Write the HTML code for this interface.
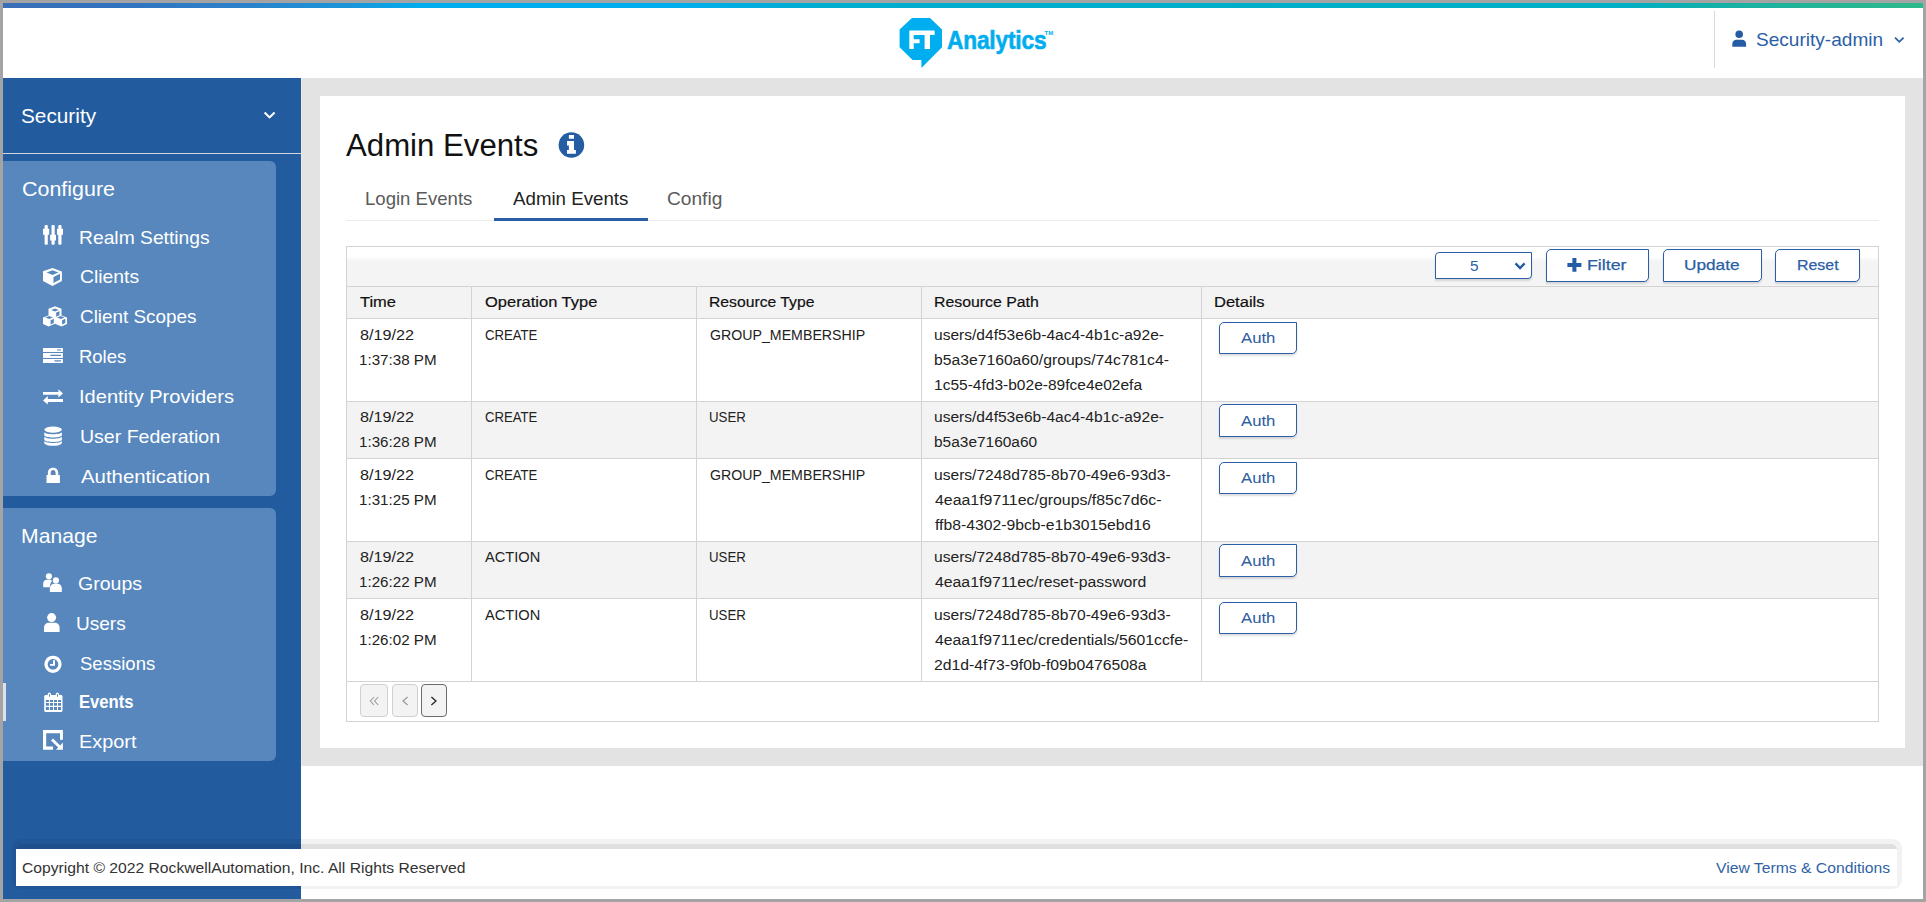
<!DOCTYPE html>
<html><head><meta charset="utf-8"><title>Admin Events</title>
<style>
*{box-sizing:border-box;margin:0;padding:0}
html,body{width:1926px;height:902px;overflow:hidden;background:#a4a4a4}
body{font-family:"Liberation Sans",sans-serif}
#root{position:relative;width:1926px;height:902px;background:#a4a4a4;overflow:hidden}
.a{position:absolute}
.t{position:absolute;white-space:nowrap;font-family:"Liberation Sans",sans-serif}
.topbar{left:3px;top:3px;width:1920px;height:5px;background:linear-gradient(to right,#3b6fb7 0%,#3271bd 5%,#2c80c9 12%,#1a95d8 18%,#00aeef 22%,#00aeef 35%,#00acd0 42%,#00aec8 70%,#00aec6 84%,#17b0a4 90%,#25b595 95%,#2bb98a 100%)}
.header{left:3px;top:8px;width:1920px;height:70px;background:#fff}
.hdiv{left:1714px;top:11px;width:1px;height:57px;background:#d5dbe2}
.side{left:3px;top:78px;width:298px;height:821px;background:#235b9f}
.sdiv{left:3px;top:153px;width:298px;height:1px;background:#d3d6da}
.panel{background:#5787bd;border-radius:0 6px 6px 0}
.sline{left:301px;top:78px;width:1px;height:688px;background:#eeeae6}
.maingray{left:302px;top:78px;width:1621px;height:688px;background:#e3e3e3}
.mainwhite{left:301px;top:766px;width:1622px;height:133px;background:#fff}
.card{left:320px;top:96px;width:1585px;height:652px;background:#fff}
.tabline{left:346px;top:220px;width:1533px;height:1px;background:#ececec}
.tabact{left:494px;top:218px;width:154px;height:3px;background:#2a5ea5}
.tbl{left:346px;top:246px;width:1533px;height:476px;border:1px solid #d3d3d3;background:#fff}
.toolbar{left:347px;top:247px;width:1531px;height:39px;background:linear-gradient(to bottom,#fff 0px,#fff 10px,#f8f8f8 12.5px,#f4f4f4 15px,#f4f4f4 100%)}
.hrow{left:347px;top:287px;width:1531px;height:31px;background:#f3f3f3}
.hl{height:1px;background:#d3d3d3}
.vl{width:1px;background:#d3d3d3}
.stripe{background:#f3f3f3}
.btn{border:1.5px solid #2b5ea6;background:#fff;border-radius:5px 0 5px 0;box-shadow:0 2px 2px rgba(0,0,0,.13)}
.pbtn{border:1px solid #cfcfcf;background:#f3f3f3;border-radius:4px}
.footshadow{left:12px;top:839px;width:1890px;height:50px;background:rgba(0,0,0,.05);border-radius:9px}
.footband{left:16px;top:844px;width:1881px;height:6px;background:rgba(0,0,0,.08);border-radius:6px 6px 0 0}
.footer{left:16px;top:849px;width:1881px;height:37px;background:#fff}

</style></head><body>
<div id="root">
<div class="a topbar"></div>
<div class="a header"></div>
<div class="a hdiv"></div>
<!-- logo -->
<svg class="a" style="left:895px;top:14px" width="60" height="58" viewBox="895 14 60 58">
  <polygon fill="#00aeef" points="912,18 930,18 942,29.6 942,47.3 921.4,68 921.4,60 912.6,60 899.6,47.3 899.6,29.6"/>
  <path fill="#fff" d="M909.3,30.6 H934.6 V35 H930 V48.9 H924.6 V35 H913.7 V39.3 H919.6 V43.3 H913.7 V48.9 H909.3 Z"/>
</svg>
<div class="t" style="left:946.8px;top:26.5px;font-size:26px;line-height:26px;font-weight:700;color:#00aeef;transform:scaleX(0.873);transform-origin:0 0;letter-spacing:-0.2px;-webkit-text-stroke:0.6px #00aeef">Analytics</div>
<div class="t" style="left:1044.5px;top:30px;font-size:6px;line-height:6px;font-weight:700;color:#00aeef">TM</div>
<!-- header user -->
<svg class="a" style="left:1730px;top:28px" width="20" height="22" viewBox="1730 28 20 22">
  <circle cx="1739.2" cy="34.2" r="3.8" fill="#245da3"/>
  <path fill="#245da3" d="M1732.3,46.8 V44 C1732.3,41.5 1734,39.7 1736.5,39.7 H1742 C1744.4,39.7 1746.1,41.5 1746.1,44 V46.8 Z"/>
</svg>
<svg class="a" style="left:1890px;top:33px" width="18" height="14" viewBox="1890 33 18 14">
  <polyline points="1895,37.6 1899.3,41.8 1903.6,37.6" fill="none" stroke="#2b5fa7" stroke-width="1.8"/>
</svg>

<!-- sidebar -->
<div class="a side"></div>
<div class="a sdiv"></div>
<svg class="a" style="left:258px;top:106px" width="22" height="18" viewBox="258 106 22 18">
  <polyline points="264.6,112.5 269.6,117.4 274.6,112.5" fill="none" stroke="#fff" stroke-width="2.1"/>
</svg>
<div class="a panel" style="left:3px;top:161px;width:273px;height:335px"></div>
<div class="a panel" style="left:3px;top:508px;width:273px;height:253px"></div>
<div class="a" style="left:3px;top:683px;width:3px;height:38px;background:#dde2ea"></div>

<svg class="a" style="left:38px;top:220px" width="34" height="540" viewBox="38 220 34 540" fill="#fff">
  <!-- sliders -->
  <rect x="44.6" y="225" width="3.2" height="19.8" rx="1"/>
  <rect x="51.5" y="225" width="3.2" height="19.8" rx="1"/>
  <rect x="58.3" y="225" width="3.2" height="19.8" rx="1"/>
  <path fill-rule="evenodd" d="M43,228.8 h6.2 v6 h-6.2 z M45.1,231 v1.8 h1.9 v-1.8 z"/>
  <path fill-rule="evenodd" d="M50.1,234.7 h5.9 v5.8 h-5.9 z M52.1,236.9 v1.8 h1.9 v-1.8 z"/>
  <path fill-rule="evenodd" d="M57,228.8 h6 v6 h-6 z M59.1,231 v1.8 h1.9 v-1.8 z"/>
  <!-- cube -->
  <path fill-rule="evenodd" d="M52.5,267.9 L61.9,271.5 V281 L52.5,286 L43,281 V271.3 Z M46.6,272.6 L52.5,274.9 L58.4,272.6 L52.5,270.3 Z M53.5,277 V282.9 L60,279.6 V273.8 Z"/>
  <!-- cubes -->
  <path fill-rule="evenodd" d="M55,306.2 L61.5,308.8 V315.5 L67,317.6 V324 L61.5,326.5 L55,323.8 L48.5,326.5 L43,324 V317.6 L48.5,315.5 V308.8 Z
    M51.3,310 L55,311.4 L58.7,310 L55,308.6 Z M56.2,312.6 V316.7 L59.5,315.3 V311.3 Z
    M45.5,317.5 L49.2,318.9 L52.9,317.5 L49.2,316.1 Z M50.6,320.2 V324.4 L53.8,323 V318.8 Z
    M57.1,317.5 L60.8,318.9 L64.5,317.5 L60.8,316.1 Z M62.1,320.2 V324.4 L65.3,323 V318.8 Z"/>
  <!-- server -->
  <path fill-rule="evenodd" d="M43,347.9 h19.9 v4.1 h-19.9 z M57,349.4 v1.2 h4 v-1.2 z"/>
  <path fill-rule="evenodd" d="M43,352.9 h19.9 v5 h-19.9 z M50.4,354.8 v1.3 h10.6 v-1.3 z"/>
  <path fill-rule="evenodd" d="M43,358.9 h19.9 v4 h-19.9 z M54.4,360.3 v1.3 h6.6 v-1.3 z"/>
  <!-- exchange -->
  <path d="M43,391.9 H58.4 V389.2 L63,393.4 L58.4,397.6 V394.8 H43 Z"/>
  <path d="M63,399 H47.8 V396 L43,400.5 L47.8,404.4 V401.9 H63 Z"/>
  <!-- database -->
  <ellipse cx="53.1" cy="429.6" rx="8.8" ry="3.1"/>
  <path d="M44.3,432.2 C46,434.8 60.2,434.8 61.9,432.2 V435.6 C60.2,438.2 46,438.2 44.3,435.6 Z"/>
  <path d="M44.3,436.7 C46,439.3 60.2,439.3 61.9,436.7 V440 C60.2,442.6 46,442.6 44.3,440 Z"/>
  <path d="M44.3,441.1 C46,443.7 60.2,443.7 61.9,441.1 V443.2 C60.2,446.6 46,446.6 44.3,443.2 Z"/>
  <!-- lock -->
  <path fill-rule="evenodd" d="M47.9,475 V472.6 C47.9,469.6 50.2,467.8 53.05,467.8 C55.9,467.8 58.2,469.6 58.2,472.6 V475 Z M50.7,475 V472.8 C50.7,471.1 51.7,469.9 53.1,469.9 C54.5,469.9 55.6,471.1 55.6,472.8 V475 Z"/>
  <rect x="46.5" y="475" width="13.4" height="8"/>
  <!-- user-friends -->
  <circle cx="48.9" cy="576.3" r="3.1"/>
  <path d="M43.2,587.3 V583.6 C43.2,581.5 44.8,579.8 46.9,579.8 H49.5 C50.6,579.8 51.5,580.2 52.1,580.9 C50.6,582.3 49.9,584.4 49.9,586.5 V587.3 Z"/>
  <circle cx="55.9" cy="580.4" r="3.1"/>
  <path d="M49.9,591.9 V588.3 C49.9,585.8 51.8,583.8 54.3,583.8 H57.4 C59.9,583.8 61.8,585.8 61.8,588.3 V591.9 Z"/>
  <!-- user -->
  <circle cx="51.6" cy="617.6" r="4.5"/>
  <path d="M44,631.9 V627.6 C44,625 46,622.8 48.6,622.8 H55 C57.6,622.8 59.6,625 59.6,627.6 V631.9 Z"/>
  <!-- clock -->
  <path fill-rule="evenodd" d="M53,655.7 A8.6,8.6 0 1 1 52.99,655.7 Z M53,659 A5.3,5.3 0 1 0 53.01,659 Z"/>
  <path d="M53,660.2 H55 V665.8 H50 V664 H53 Z"/>
  <!-- calendar -->
  <path fill-rule="evenodd" d="M44.2,696.5 C44.2,695.6 44.9,695 45.8,695 H47.6 C47.7,693.4 48.4,692.5 49.4,692.5 C50.4,692.5 51.1,693.4 51.2,695 H55.6 C55.7,693.4 56.4,692.5 57.4,692.5 C58.4,692.5 59.1,693.4 59.2,695 H61 C61.9,695 62.5,695.6 62.5,696.5 V710.4 C62.5,711.3 61.9,711.9 61,711.9 H45.7 C44.8,711.9 44.2,711.3 44.2,710.4 Z
   M45.9,700 h3 v2 h-3z M49.9,700 h3.1 v2 h-3.1z M54,700 h3 v2 h-3z M58,700 h3 v2 h-3z
   M45.9,703.1 h3 v2.6 h-3z M49.9,703.1 h3.1 v2.6 h-3.1z M54,703.1 h3 v2.6 h-3z M58,703.1 h3 v2.6 h-3z
   M45.9,707 h3 v2.9 h-3z M49.9,707 h3.1 v2.9 h-3.1z M54,707 h3 v2.9 h-3z M58,707 h3 v2.9 h-3z
   M49,694 h0.9 v2.8 h-0.9z M57,694 h0.9 v2.8 h-0.9z"/>
  <!-- export -->
  <path d="M43,730 H62.9 V739.7 H60 V733.2 H46.2 V746.6 H53 V749.8 H43 Z"/>
  <path d="M56,749.8 L58.2,747.6 L51,740.4 L53,738.4 L60.2,745.6 L62.9,742.6 V749.8 Z"/>
</svg>

<!-- main -->
<div class="a sline"></div><div class="a" style="left:301px;top:766px;width:1px;height:133px;background:#ebebeb"></div>
<div class="a maingray"></div>
<div class="a mainwhite"></div>
<div class="a card"></div>
<svg class="a" style="left:556px;top:130px" width="32" height="32" viewBox="556 130 32 32">
  <circle cx="571.4" cy="145" r="12.8" fill="#245da3"/>
  <path fill="#fff" d="M568.9,135 H574 V138.7 H568.9 Z M567,141 H574 V149.9 H575.9 V153.8 H567 V149.9 H568.9 V145.5 H567 Z"/>
</svg>
<div class="a tabline"></div>
<div class="a tabact"></div>

<div class="a tbl"></div>
<div class="a toolbar"></div>
<div class="a hl" style="left:347px;top:286px;width:1531px"></div>
<div class="a hrow"></div>
<div class="a hl" style="left:347px;top:318px;width:1531px"></div>
<div class="a stripe" style="left:347px;top:402px;width:1531px;height:56px"></div>
<div class="a stripe" style="left:347px;top:542px;width:1531px;height:56px"></div>
<div class="a hl" style="left:347px;top:401px;width:1531px"></div>
<div class="a hl" style="left:347px;top:458px;width:1531px"></div>
<div class="a hl" style="left:347px;top:541px;width:1531px"></div>
<div class="a hl" style="left:347px;top:598px;width:1531px"></div>
<div class="a hl" style="left:347px;top:681px;width:1531px"></div>
<div class="a vl" style="left:471px;top:287px;height:394px"></div>
<div class="a vl" style="left:696px;top:287px;height:394px"></div>
<div class="a vl" style="left:921px;top:287px;height:394px"></div>
<div class="a vl" style="left:1201px;top:287px;height:394px"></div>

<!-- toolbar controls -->
<div class="a btn" style="left:1435px;top:252px;width:97px;height:27px;border-radius:4px 0 4px 0"></div>
<svg class="a" style="left:1510px;top:258px" width="20" height="14" viewBox="1510 258 20 14">
  <polyline points="1515.5,263.4 1520.1,268 1524.6,263.4" fill="none" stroke="#245da3" stroke-width="2.4"/>
</svg>
<div class="a btn" style="left:1546px;top:249px;width:103px;height:33px"></div>
<svg class="a" style="left:1565px;top:256px" width="18" height="18" viewBox="1565 256 18 18">
  <path fill="#245da3" d="M1572.4,258 H1576.4 V262.9 H1581.4 V266.9 H1576.4 V271.8 H1572.4 V266.9 H1567.4 V262.9 H1572.4 Z"/>
</svg>
<div class="a btn" style="left:1663px;top:249px;width:99px;height:33px"></div>
<div class="a btn" style="left:1775px;top:249px;width:85px;height:33px"></div>

<!-- auth buttons -->
<div class="a btn" style="left:1219px;top:322px;width:78px;height:32px;border-width:1.5px"></div>
<div class="a btn" style="left:1219px;top:404px;width:78px;height:33px;border-width:1.5px"></div>
<div class="a btn" style="left:1219px;top:462px;width:78px;height:32px;border-width:1.5px"></div>
<div class="a btn" style="left:1219px;top:544px;width:78px;height:33px;border-width:1.5px"></div>
<div class="a btn" style="left:1219px;top:602px;width:78px;height:32px;border-width:1.5px"></div>

<!-- pagination -->
<div class="a pbtn" style="left:360px;top:684px;width:28px;height:33px"></div>
<div class="a pbtn" style="left:392px;top:684px;width:26px;height:33px"></div>
<div class="a pbtn" style="left:421px;top:684px;width:26px;height:33px;border-color:#6b6b6b"></div>
<svg class="a" style="left:360px;top:690px" width="90" height="22" viewBox="360 690 90 22" fill="none" stroke-width="1.2">
  <polyline points="374,697 370.4,701 374,705" stroke="#9a9a9a" stroke-width="1.1"/>
  <polyline points="378.2,697 374.6,701 378.2,705" stroke="#9a9a9a" stroke-width="1.1"/>
  <polyline points="407.6,697 403,701 407.6,705" stroke="#9a9a9a"/>
  <polyline points="431.4,697 436,701 431.4,705" stroke="#222" stroke-width="1.25"/>
</svg>

<!-- footer -->
<div class="a footshadow"></div>
<div class="a footband"></div>
<div class="a footer"></div>

<div class="t" style="left:1755.73px;top:31.25px;font-size:18.36px;line-height:18.36px;transform:scaleX(1.0382);transform-origin:0 0;color:#2b5fa7;font-weight:400;">Security-admin</div>
<div class="t" style="left:21.36px;top:105.93px;font-size:20.4px;line-height:20.4px;transform:scaleX(1.0190);transform-origin:0 0;color:#ffffff;font-weight:400;">Security</div>
<div class="t" style="left:21.51px;top:179.13px;font-size:20.4px;line-height:20.4px;transform:scaleX(1.0512);transform-origin:0 0;color:#ffffff;font-weight:400;">Configure</div>
<div class="t" style="left:79.42px;top:227.58px;font-size:19.04px;line-height:19.04px;transform:scaleX(1.0127);transform-origin:0 0;color:#ffffff;font-weight:400;">Realm Settings</div>
<div class="t" style="left:80.02px;top:267.08px;font-size:19.04px;line-height:19.04px;transform:scaleX(1.0167);transform-origin:0 0;color:#ffffff;font-weight:400;">Clients</div>
<div class="t" style="left:80.04px;top:307.08px;font-size:19.04px;line-height:19.04px;transform:scaleX(0.9919);transform-origin:0 0;color:#ffffff;font-weight:400;">Client Scopes</div>
<div class="t" style="left:79.39px;top:347.08px;font-size:19.04px;line-height:19.04px;transform:scaleX(0.9693);transform-origin:0 0;color:#ffffff;font-weight:400;">Roles</div>
<div class="t" style="left:79.35px;top:387.08px;font-size:19.04px;line-height:19.04px;transform:scaleX(1.0539);transform-origin:0 0;color:#ffffff;font-weight:400;">Identity Providers</div>
<div class="t" style="left:80.09px;top:427.08px;font-size:19.04px;line-height:19.04px;transform:scaleX(1.0261);transform-origin:0 0;color:#ffffff;font-weight:400;">User Federation</div>
<div class="t" style="left:80.56px;top:466.88px;font-size:19.04px;line-height:19.04px;transform:scaleX(1.0703);transform-origin:0 0;color:#ffffff;font-weight:400;">Authentication</div>
<div class="t" style="left:20.56px;top:525.63px;font-size:20.4px;line-height:20.4px;transform:scaleX(1.0384);transform-origin:0 0;color:#ffffff;font-weight:400;">Manage</div>
<div class="t" style="left:77.82px;top:574.08px;font-size:19.04px;line-height:19.04px;transform:scaleX(1.0277);transform-origin:0 0;color:#ffffff;font-weight:400;">Groups</div>
<div class="t" style="left:76.33px;top:613.58px;font-size:19.04px;line-height:19.04px;transform:scaleX(1.0008);transform-origin:0 0;color:#ffffff;font-weight:400;">Users</div>
<div class="t" style="left:79.76px;top:653.88px;font-size:19.04px;line-height:19.04px;transform:scaleX(0.9739);transform-origin:0 0;color:#ffffff;font-weight:400;">Sessions</div>
<div class="t" style="left:78.97px;top:731.98px;font-size:19.04px;line-height:19.04px;transform:scaleX(1.0444);transform-origin:0 0;color:#ffffff;font-weight:400;">Export</div>
<div class="t" style="left:78.79px;top:691.98px;font-size:19.04px;line-height:19.04px;transform:scaleX(0.8733);transform-origin:0 0;color:#ffffff;font-weight:700;">Events</div>
<div class="t" style="left:346.14px;top:130.39px;font-size:30.6px;line-height:30.6px;transform:scaleX(1.0190);transform-origin:0 0;color:#111;font-weight:400;">Admin Events</div>
<div class="t" style="left:365.08px;top:190.05px;font-size:18.36px;line-height:18.36px;transform:scaleX(1.0117);transform-origin:0 0;color:#5a5a5a;font-weight:400;">Login Events</div>
<div class="t" style="left:512.96px;top:189.55px;font-size:18.36px;line-height:18.36px;transform:scaleX(1.0188);transform-origin:0 0;color:#222;font-weight:400;">Admin Events</div>
<div class="t" style="left:667.13px;top:190.05px;font-size:18.36px;line-height:18.36px;transform:scaleX(1.0419);transform-origin:0 0;color:#5a5a5a;font-weight:400;">Config</div>
<div class="t" style="left:1470.48px;top:258.45px;font-size:15.3px;line-height:15.3px;transform:scaleX(1.0085);transform-origin:0 0;color:#2a5ea5;font-weight:400;">5</div>
<div class="t" style="left:1587.04px;top:257.35px;font-size:15.3px;line-height:15.3px;transform:scaleX(1.1620);transform-origin:0 0;color:#2a5ea5;font-weight:400;-webkit-text-stroke:0.25px #2a5ea5;">Filter</div>
<div class="t" style="left:1683.97px;top:257.35px;font-size:15.3px;line-height:15.3px;transform:scaleX(1.1252);transform-origin:0 0;color:#2a5ea5;font-weight:400;-webkit-text-stroke:0.25px #2a5ea5;">Update</div>
<div class="t" style="left:1796.79px;top:257.35px;font-size:15.3px;line-height:15.3px;transform:scaleX(1.0410);transform-origin:0 0;color:#2a5ea5;font-weight:400;-webkit-text-stroke:0.25px #2a5ea5;">Reset</div>
<div class="t" style="left:359.83px;top:294.05px;font-size:15.3px;line-height:15.3px;transform:scaleX(1.0757);transform-origin:0 0;color:#111;font-weight:400;-webkit-text-stroke:0.2px #111;">Time</div>
<div class="t" style="left:484.82px;top:294.05px;font-size:15.3px;line-height:15.3px;transform:scaleX(1.0769);transform-origin:0 0;color:#111;font-weight:400;-webkit-text-stroke:0.2px #111;">Operation Type</div>
<div class="t" style="left:709.21px;top:294.05px;font-size:15.3px;line-height:15.3px;transform:scaleX(1.0272);transform-origin:0 0;color:#111;font-weight:400;-webkit-text-stroke:0.2px #111;">Resource Type</div>
<div class="t" style="left:934.10px;top:294.05px;font-size:15.3px;line-height:15.3px;transform:scaleX(1.0349);transform-origin:0 0;color:#111;font-weight:400;-webkit-text-stroke:0.2px #111;">Resource Path</div>
<div class="t" style="left:1213.54px;top:294.05px;font-size:15.3px;line-height:15.3px;transform:scaleX(1.0802);transform-origin:0 0;color:#111;font-weight:400;-webkit-text-stroke:0.2px #111;">Details</div>
<div class="t" style="left:359.60px;top:326.85px;font-size:15.3px;line-height:15.3px;transform:scaleX(1.0592);transform-origin:0 0;color:#222;font-weight:400;">8/19/22</div>
<div class="t" style="left:359.15px;top:351.85px;font-size:15.3px;line-height:15.3px;transform:scaleX(0.9909);transform-origin:0 0;color:#222;font-weight:400;">1:37:38 PM</div>
<div class="t" style="left:484.83px;top:326.85px;font-size:15.3px;line-height:15.3px;transform:scaleX(0.8597);transform-origin:0 0;color:#222;font-weight:400;">CREATE</div>
<div class="t" style="left:709.79px;top:326.85px;font-size:15.3px;line-height:15.3px;transform:scaleX(0.9266);transform-origin:0 0;color:#222;font-weight:400;">GROUP_MEMBERSHIP</div>
<div class="t" style="left:934.19px;top:326.85px;font-size:15.3px;line-height:15.3px;transform:scaleX(1.0167);transform-origin:0 0;color:#222;font-weight:400;">users/d4f53e6b-4ac4-4b1c-a92e-</div>
<div class="t" style="left:934.19px;top:351.85px;font-size:15.3px;line-height:15.3px;transform:scaleX(1.0267);transform-origin:0 0;color:#222;font-weight:400;">b5a3e7160a60/groups/74c781c4-</div>
<div class="t" style="left:934.02px;top:376.85px;font-size:15.3px;line-height:15.3px;transform:scaleX(1.0150);transform-origin:0 0;color:#222;font-weight:400;">1c55-4fd3-b02e-89fce4e02efa</div>
<div class="t" style="left:1240.57px;top:330.15px;font-size:15.3px;line-height:15.3px;transform:scaleX(1.0926);transform-origin:0 0;color:#2d5e9f;font-weight:400;-webkit-text-stroke:0.05px #2d5e9f;">Auth</div>
<div class="t" style="left:359.60px;top:409.35px;font-size:15.3px;line-height:15.3px;transform:scaleX(1.0592);transform-origin:0 0;color:#222;font-weight:400;">8/19/22</div>
<div class="t" style="left:359.15px;top:434.35px;font-size:15.3px;line-height:15.3px;transform:scaleX(0.9909);transform-origin:0 0;color:#222;font-weight:400;">1:36:28 PM</div>
<div class="t" style="left:484.83px;top:409.35px;font-size:15.3px;line-height:15.3px;transform:scaleX(0.8597);transform-origin:0 0;color:#222;font-weight:400;">CREATE</div>
<div class="t" style="left:709.48px;top:409.35px;font-size:15.3px;line-height:15.3px;transform:scaleX(0.8675);transform-origin:0 0;color:#222;font-weight:400;">USER</div>
<div class="t" style="left:934.19px;top:409.35px;font-size:15.3px;line-height:15.3px;transform:scaleX(1.0167);transform-origin:0 0;color:#222;font-weight:400;">users/d4f53e6b-4ac4-4b1c-a92e-</div>
<div class="t" style="left:934.20px;top:434.35px;font-size:15.3px;line-height:15.3px;transform:scaleX(1.0105);transform-origin:0 0;color:#222;font-weight:400;">b5a3e7160a60</div>
<div class="t" style="left:1240.57px;top:413.15px;font-size:15.3px;line-height:15.3px;transform:scaleX(1.0926);transform-origin:0 0;color:#2d5e9f;font-weight:400;-webkit-text-stroke:0.05px #2d5e9f;">Auth</div>
<div class="t" style="left:359.60px;top:466.85px;font-size:15.3px;line-height:15.3px;transform:scaleX(1.0592);transform-origin:0 0;color:#222;font-weight:400;">8/19/22</div>
<div class="t" style="left:359.15px;top:491.85px;font-size:15.3px;line-height:15.3px;transform:scaleX(0.9909);transform-origin:0 0;color:#222;font-weight:400;">1:31:25 PM</div>
<div class="t" style="left:484.83px;top:466.85px;font-size:15.3px;line-height:15.3px;transform:scaleX(0.8597);transform-origin:0 0;color:#222;font-weight:400;">CREATE</div>
<div class="t" style="left:709.79px;top:466.85px;font-size:15.3px;line-height:15.3px;transform:scaleX(0.9266);transform-origin:0 0;color:#222;font-weight:400;">GROUP_MEMBERSHIP</div>
<div class="t" style="left:934.19px;top:466.85px;font-size:15.3px;line-height:15.3px;transform:scaleX(1.0191);transform-origin:0 0;color:#222;font-weight:400;">users/7248d785-8b70-49e6-93d3-</div>
<div class="t" style="left:934.84px;top:491.85px;font-size:15.3px;line-height:15.3px;transform:scaleX(1.0379);transform-origin:0 0;color:#222;font-weight:400;">4eaa1f9711ec/groups/f85c7d6c-</div>
<div class="t" style="left:934.98px;top:516.85px;font-size:15.3px;line-height:15.3px;transform:scaleX(1.0287);transform-origin:0 0;color:#222;font-weight:400;">ffb8-4302-9bcb-e1b3015ebd16</div>
<div class="t" style="left:1240.57px;top:470.15px;font-size:15.3px;line-height:15.3px;transform:scaleX(1.0926);transform-origin:0 0;color:#2d5e9f;font-weight:400;-webkit-text-stroke:0.05px #2d5e9f;">Auth</div>
<div class="t" style="left:359.60px;top:549.35px;font-size:15.3px;line-height:15.3px;transform:scaleX(1.0592);transform-origin:0 0;color:#222;font-weight:400;">8/19/22</div>
<div class="t" style="left:359.15px;top:574.35px;font-size:15.3px;line-height:15.3px;transform:scaleX(0.9909);transform-origin:0 0;color:#222;font-weight:400;">1:26:22 PM</div>
<div class="t" style="left:485.47px;top:549.35px;font-size:15.3px;line-height:15.3px;transform:scaleX(0.9570);transform-origin:0 0;color:#222;font-weight:400;">ACTION</div>
<div class="t" style="left:709.48px;top:549.35px;font-size:15.3px;line-height:15.3px;transform:scaleX(0.8675);transform-origin:0 0;color:#222;font-weight:400;">USER</div>
<div class="t" style="left:934.19px;top:549.35px;font-size:15.3px;line-height:15.3px;transform:scaleX(1.0191);transform-origin:0 0;color:#222;font-weight:400;">users/7248d785-8b70-49e6-93d3-</div>
<div class="t" style="left:934.84px;top:574.35px;font-size:15.3px;line-height:15.3px;transform:scaleX(1.0330);transform-origin:0 0;color:#222;font-weight:400;">4eaa1f9711ec/reset-password</div>
<div class="t" style="left:1240.57px;top:553.15px;font-size:15.3px;line-height:15.3px;transform:scaleX(1.0926);transform-origin:0 0;color:#2d5e9f;font-weight:400;-webkit-text-stroke:0.05px #2d5e9f;">Auth</div>
<div class="t" style="left:359.60px;top:606.85px;font-size:15.3px;line-height:15.3px;transform:scaleX(1.0592);transform-origin:0 0;color:#222;font-weight:400;">8/19/22</div>
<div class="t" style="left:359.15px;top:631.85px;font-size:15.3px;line-height:15.3px;transform:scaleX(0.9909);transform-origin:0 0;color:#222;font-weight:400;">1:26:02 PM</div>
<div class="t" style="left:485.47px;top:606.85px;font-size:15.3px;line-height:15.3px;transform:scaleX(0.9570);transform-origin:0 0;color:#222;font-weight:400;">ACTION</div>
<div class="t" style="left:709.48px;top:606.85px;font-size:15.3px;line-height:15.3px;transform:scaleX(0.8675);transform-origin:0 0;color:#222;font-weight:400;">USER</div>
<div class="t" style="left:934.19px;top:606.85px;font-size:15.3px;line-height:15.3px;transform:scaleX(1.0191);transform-origin:0 0;color:#222;font-weight:400;">users/7248d785-8b70-49e6-93d3-</div>
<div class="t" style="left:934.84px;top:631.85px;font-size:15.3px;line-height:15.3px;transform:scaleX(1.0314);transform-origin:0 0;color:#222;font-weight:400;">4eaa1f9711ec/credentials/5601ccfe-</div>
<div class="t" style="left:934.41px;top:656.85px;font-size:15.3px;line-height:15.3px;transform:scaleX(1.0284);transform-origin:0 0;color:#222;font-weight:400;">2d1d-4f73-9f0b-f09b0476508a</div>
<div class="t" style="left:1240.57px;top:610.15px;font-size:15.3px;line-height:15.3px;transform:scaleX(1.0926);transform-origin:0 0;color:#2d5e9f;font-weight:400;-webkit-text-stroke:0.05px #2d5e9f;">Auth</div>
<div class="t" style="left:21.50px;top:860.45px;font-size:15.3px;line-height:15.3px;transform:scaleX(1.0243);transform-origin:0 0;color:#333;font-weight:400;">Copyright © 2022 RockwellAutomation, Inc. All Rights Reserved</div>
<div class="t" style="left:1716.33px;top:860.05px;font-size:15.3px;line-height:15.3px;transform:scaleX(1.0273);transform-origin:0 0;color:#2f63a6;font-weight:400;">View Terms &amp; Conditions</div>
</div>
</body></html>
